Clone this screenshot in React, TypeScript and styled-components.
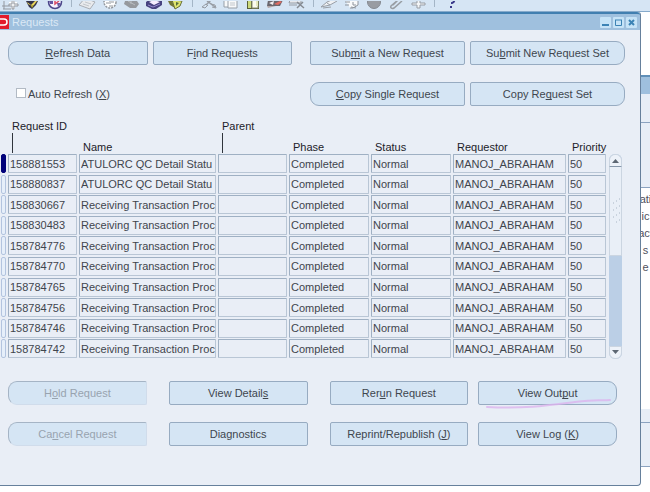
import React from "react";
import styled, { createGlobalStyle, css } from "styled-components";

const GlobalStyle = createGlobalStyle`
  * { box-sizing: border-box; }
  body {
    margin: 0;
    background: #fff;
    color: #3f454d;
    font: 11px/14px "Liberation Sans", Arial, sans-serif;
    overflow-x: hidden;
  }
  button, input { font: inherit; color: inherit; }
`;

const Toolbar = styled.header`
  display: flex;
  height: 12px;
  overflow: hidden;
  background: #d6e5f4;
  border-bottom: 1px solid #86aacb;
`;

const Tool = styled.button`
  flex: none;
  display: block;
  width: 22px;
  height: 11px;
  padding: 0 2px;
  border: 0;
  background: none;
  svg { display: block; }
`;

const Divider = styled.span`
  flex: none;
  width: 1px;
  height: 7px;
  margin: 0 5px;
  background: #a4b5c6;
`;

const Desktop = styled.main`
  display: flex;
  align-items: flex-start;
`;

const Window = styled.section`
  flex: 1;
  min-width: 0;
  background: #e9eef6;
  border: solid #66809c;
  border-width: 0 1px 1px 0;
  border-radius: 0 3px 4px 0;
`;

const TitleBar = styled.div`
  display: flex;
  align-items: center;
  height: 18px;
  padding-right: 3px;
  background: #9fc0de;
  border-top: 2px solid #417fb0;
  border-radius: 0 3px 0 0;
`;

const Title = styled.h1`
  flex: 1;
  margin: 0 0 0 3px;
  font-size: 11px;
  font-weight: normal;
  color: #dbe8f5;
`;

const WindowButton = styled.button`
  width: 11px;
  height: 11px;
  margin-left: 2px;
  padding: 0;
  border: 0;
  border-radius: 1px;
  background: #c6e3f7;
  svg { display: block; }
`;

const Actions = styled.div`
  display: flex;
  gap: 18px;
  padding: 11px 15px 0 8px;
`;

const ActionGroup = styled.div<{ $grow: number }>`
  flex: ${(p) => p.$grow} 1 0;
  display: grid;
  grid-template-columns: 1fr 1fr;
  gap: 17px 5px;
  align-items: center;
`;

const LowerActions = styled.div`
  display: grid;
  gap: 17px;
  padding: 21px 23px 39px 8px;
`;

const LowerRow = styled.div`
  display: flex;
  gap: 10px;
  > * { flex: 1 1 0; }
  > :not(:first-child):not(:last-child) { margin-left: 12px; }
`;

const Button = styled.button<{ $cap?: "left" | "right" }>`
  position: relative;
  height: 24px;
  padding: 0;
  border: 1px solid #97abc1;
  border-radius: 2px;
  background: #d5e5f4;
  color: #40464e;
  white-space: nowrap;
  ${(p) => p.$cap === "left" && css`border-radius: 9px 2px 2px 9px;`}
  ${(p) => p.$cap === "right" && css`border-radius: 2px 9px 9px 2px;`}
  &:disabled {
    color: #98a3af;
    border-color: #a5b4c5 #d0dceb #d0dceb #a5b4c5;
  }
`;

const Key = styled.u`
  text-decoration-skip-ink: none;
  text-underline-offset: 1px;
`;

const PenStroke = styled.svg`
  position: absolute;
  left: 6px;
  top: 15px;
  width: 128px;
  height: 14px;
  overflow: visible;
  pointer-events: none;
`;

const CheckLabel = styled.label`
  grid-column: 1 / -1;
  display: flex;
  align-items: center;
  height: 24px;
  padding-left: 8px;
  gap: 2px;
`;

const CheckBox = styled.input`
  appearance: none;
  width: 10px;
  height: 10px;
  margin: 0 0 3px;
  background: #fff;
  border: 1px solid #b2bac4;
  &:checked { background: #41699b; }
`;

const Records = styled.div`
  display: flex;
  align-items: flex-end;
  gap: 1px;
  padding: 13px 18px 0 0;
`;

const Table = styled.table`
  flex: 1;
  width: 100%;
  height: 241px;
  min-width: 0;
  table-layout: fixed;
  border-collapse: collapse;
`;

const Col = styled.col<{ $w?: number }>`
  width: ${(p) => (p.$w ? `${p.$w}px` : "auto")};
`;

const HeadCell = styled.th<{ $raised?: boolean }>`
  height: 35px;
  padding: 0 0 0 4px;
  vertical-align: ${(p) => (p.$raised ? "top" : "bottom")};
  text-align: left;
  font-weight: normal;
  color: #1c2129;
  white-space: nowrap;
  ${(p) => p.$raised && css`
    &::after {
      content: "";
      display: block;
      width: 1px;
      height: 20px;
      background: #30353c;
    }
  `}
`;

const Cell = styled.td`
  padding: 0 2px 0 0;
  vertical-align: top;
`;

const MarkerCell = styled.td`
  padding: 0 2px 0 1px;
  vertical-align: top;
`;

const Marker = styled.button<{ $current: boolean }>`
  display: block;
  width: 5px;
  height: 19px;
  padding: 0;
  border: 1px solid ${(p) => (p.$current ? "#02027a" : "#b3c4df")};
  border-radius: 2px;
  background: ${(p) => (p.$current ? "#02027a" : "#e6effa")};
`;

const Field = styled.input`
  display: block;
  width: 100%;
  height: 19px;
  padding: 0 0 0 1px;
  border: 1px solid;
  border-color: #9fb0c3 #b9c6d5 #b9c6d5 #9fb0c3;
  border-radius: 1px;
  background: #e9eef6;
  outline: 0;
`;

const ScrollBar = styled.div`
  flex: none;
  display: flex;
  flex-direction: column;
  width: 13px;
  height: 205px;
  margin-bottom: 1px;
  border-radius: 6px;
  background: #bbcfe6;
`;

const ScrollButton = styled.button<{ $end?: boolean }>`
  display: block;
  height: 13px;
  padding: 0;
  border: 1px solid #cbd5e1;
  border-radius: ${(p) => (p.$end ? "0 0 6px 6px" : "6px 6px 0 0")};
  ${(p) => !p.$end && css`border-bottom-color: #8697aa;`}
  background: #edf2f9;
  svg { display: block; margin: 0 auto; }
`;

const Thumb = styled.div`
  display: grid;
  place-items: center;
  height: 89px;
  background: #e9eff7;
  border: solid #cbd5e1;
  border-width: 0 1px 1px;
`;

const Track = styled.div`
  flex: 1;
`;

const Behind = styled.aside`
  flex: none;
  width: 9px;
  margin-top: 63px;
  overflow: hidden;
`;

const BehindTitle = styled.div`
  height: 19px;
  background: #9fc0de;
  border-top: 2px solid #5f8fb8;
`;

const BehindBand = styled.div<{ $h: number }>`
  height: ${(p) => p.$h}px;
  background: #e7eef7;
  border-bottom: 1px solid #8ba3c0;
`;

const BehindList = styled.div`
  display: flex;
  flex-direction: column;
  align-items: center;
  height: 221px;
  padding-top: 3px;
  background: #fff;
  line-height: 17px;
  white-space: nowrap;
  color: #50505c;
`;

const icons: Record<string, React.ReactNode> = {
  New: (
    <g fill="none" stroke="#92979f">
      <path d="M0 5h7M1 8h8M2 0v8" fill="#fff" />
      <path d="M11 0v8M7 3h8" stroke="#fff" strokeWidth="4" />
      <path d="M10 0v3H7v2h3v3h2V5h4V3h-4V0" fill="#eef0f2" />
    </g>
  ),
  Find: (
    <g>
      <path d="M3 0h11l-2 4-4 4-3-2-3-6z" fill="#33334a" />
      <path d="M3 1l4 3 4-4h2l-3 4-2 1-4-2z" fill="#ead75a" />
      <path d="M7 5l3-1-2 3z" fill="#b5a92d" />
    </g>
  ),
  Navigator: (
    <g>
      <circle cx="9" cy="1" r="6.5" fill="#f5f3ff" stroke="#4c4689" strokeWidth="1.5" />
      <path d="M3 0h4v3H4zM11 2h4l-3 4z" fill="#6555a0" />
      <path d="M9-2v5l4-3" fill="none" stroke="#dc4e65" strokeWidth="1.5" />
    </g>
  ),
  Save: (
    <g stroke="#a9aeb5">
      <path d="M0 4L6-3l10 4-5 7z" fill="#e8eaed" />
      <path d="M4 3l6 2M6 1l6 2" stroke="#c3c7cc" />
    </g>
  ),
  "Next Step": (
    <g fill="none" stroke="#92979d">
      <circle cx="9" cy="1" r="6" fill="#fff" strokeWidth="1.5" strokeDasharray="2 1" />
      <path d="M5 2h3M10 1h3M8 5h4M9-1v4" />
    </g>
  ),
  "Switch Responsibility": (
    <g>
      <path d="M2 0h12l2 3-3 4H7L1 3z" fill="#96999e" />
      <path d="M5 0l7 4M8 0v3" stroke="#b8bcc0" />
    </g>
  ),
  Print: (
    <g>
      <path d="M1 1l4-3 12 2v4l-6 4H7L1 5z" fill="#474380" />
      <path d="M4 1l5-2 6 2-6 3z" fill="#f6efff" />
      <path d="M3 4l5 2 7-3" stroke="#948bcf" fill="none" />
    </g>
  ),
  "Close Form": (
    <g>
      <path d="M1 0h4l3 7-5-3z" fill="#737635" />
      <path d="M5-1l10 1-2 5-5 3z" fill="#dfe46d" stroke="#697039" />
      <path d="M9 1v4l3-3z" fill="#536b38" />
    </g>
  ),
  Cut: (
    <g fill="none" stroke="#979ca4">
      <path d="M12-2L6 4M7 0l8 6" strokeWidth="1.5" />
      <path d="M6 3L2 6l3 1 3-3M11 3l4 1 1 3-4-1" />
    </g>
  ),
  Copy: (
    <g fill="#f8f9fa" stroke="#979fa8">
      <path d="M2-2h6v8H2z" />
      <path d="M6-1h9v8H6z" />
      <path d="M8 2h5M8 4h5" stroke="#c1c6cb" />
    </g>
  ),
  Paste: (
    <g>
      <path d="M3-1h12v9H3z" fill="#596038" />
      <path d="M4-1h3v8H4z" fill="#cdda7c" />
      <path d="M8-1h6v8H8z" fill="#fbfbee" stroke="#8b8e70" />
      <path d="M12 0h2v5h-2z" fill="#e5e9bd" />
    </g>
  ),
  "Clear Record": (
    <g>
      <path d="M2-1h15l-3 6H1z" fill="#6b676e" />
      <path d="M8 3l6-3 2 1-4 3z" fill="#e06b62" />
      <path d="M3 2l5-2-1 4z" fill="#f3eef0" />
      <path d="M1 5h9l-8 2z" fill="#b3a7a7" />
    </g>
  ),
  Delete: (
    <g fill="none" stroke="#989da4">
      <path d="M2-1h11v3H1zM1 4h8" fill="#e6e9ed" />
      <path d="M9 1l7 6M15 1L9 7" stroke="#858a91" strokeWidth="1.5" />
    </g>
  ),
  "Edit Field": (
    <g fill="#eff1f4" stroke="#989ea6">
      <path d="M0 6L6 1l7-3 3 2-7 4z" />
      <path d="M2 7l8-1M6 2l3 2" />
    </g>
  ),
  Zoom: (
    <g fill="#f9fafb" stroke="#8e949c">
      <path d="M2-1h13v5l-5 3H7" />
      <path d="M2 1h5M2 4h4M10 1v3h3M8 6l5 1" />
    </g>
  ),
  Translations: <circle cx="9" cy="1" r="6.5" fill="#999ca2" stroke="#858990" />,
  Attachments: (
    <g fill="none" stroke="#989da3" strokeWidth="1.5">
      <path d="M11-1L4 5c-1 2 1 3 3 2l8-7M12-2L6 4" />
    </g>
  ),
  "Folder Tools": (
    <g fill="#f3f5f7" stroke="#989da5">
      <path d="M3 2h5v-3h3v3h5v2h-5v3H8V4H3z" />
    </g>
  ),
  Help: (
    <g fill="none" stroke="#39388a" strokeWidth="2">
      <path d="M8-1c5-1 5 2 2 3v1M9 5v2" />
    </g>
  ),
};

const toolGroups = [
  ["New", "Find", "Navigator"],
  ["Save", "Next Step", "Switch Responsibility", "Print", "Close Form"],
  ["Cut", "Copy", "Paste", "Clear Record", "Delete"],
  ["Edit Field", "Zoom", "Translations", "Attachments", "Folder Tools"],
  ["Help"],
];

const windowGlyphs = [
  { label: "Minimize", d: "M2 8h7", width: 2 },
  { label: "Maximize", d: "M2 3h7M2.5 3v5.5h6V3", width: 1 },
  { label: "Close", d: "M3 3l5 5M8 3L3 8", width: 2 },
];

const columns: { label: string; width?: number; raised?: boolean }[] = [
  { label: "Request ID", width: 71, raised: true },
  { label: "Name" },
  { label: "Parent", width: 71, raised: true },
  { label: "Phase", width: 82 },
  { label: "Status", width: 82 },
  { label: "Requestor", width: 115 },
  { label: "Priority", width: 40 },
];

const qc = "ATULORC QC Detail Statu";
const receiving = "Receiving Transaction Proc";
const requests = [
  ["158881553", qc],
  ["158880837", qc],
  ["158830667", receiving],
  ["158830483", receiving],
  ["158784776", receiving],
  ["158784770", receiving],
  ["158784765", receiving],
  ["158784756", receiving],
  ["158784746", receiving],
  ["158784742", receiving],
].map(([id, name]) => [id, name, "", "Completed", "Normal", "MANOJ_ABRAHAM", "50"]);

export default function App() {
  return (
    <>
      <GlobalStyle />
      <Toolbar>
        {toolGroups.map((group, i) => (
          <React.Fragment key={group[0]}>
            {i > 0 && <Divider />}
            {group.map((name) => (
              <Tool key={name} type="button" aria-label={name}>
                <svg width="18" height="10" viewBox="0 0 18 10">{icons[name]}</svg>
              </Tool>
            ))}
          </React.Fragment>
        ))}
      </Toolbar>
      <Desktop>
        <Window>
          <TitleBar>
            <svg width="9" height="14" viewBox="0 0 9 14" aria-hidden="true">
              <path d="M0 0h9v14H0z" fill="#e21b2c" />
              <path d="M0 4h4a3 3 0 0 1 0 6H0" fill="none" stroke="#fff" strokeWidth="1.5" />
            </svg>
            <Title>Requests</Title>
            {windowGlyphs.map((g) => (
              <WindowButton key={g.label} type="button" aria-label={g.label}>
                <svg width="11" height="11" viewBox="0 0 11 11">
                  <path d={g.d} fill="none" stroke="#3c83b5" strokeWidth={g.width} />
                </svg>
              </WindowButton>
            ))}
          </TitleBar>

          <Actions>
            <ActionGroup $grow={284}>
              <Button type="button" $cap="left"><Key>R</Key>efresh Data</Button>
              <Button type="button">F<Key>i</Key>nd Requests</Button>
              <CheckLabel>
                <CheckBox type="checkbox" />
                <span>Auto Refresh (<Key>X</Key>)</span>
              </CheckLabel>
            </ActionGroup>
            <ActionGroup $grow={315}>
              <Button type="button">Sub<Key>m</Key>it a New Request</Button>
              <Button type="button" $cap="right">Su<Key>b</Key>mit New Request Set</Button>
              <Button type="button" $cap="left"><Key>C</Key>opy Single Request</Button>
              <Button type="button" $cap="right">Copy Re<Key>q</Key>uest Set</Button>
            </ActionGroup>
          </Actions>

          <Records>
            <Table>
              <colgroup>
                <Col $w={8} />
                {columns.map((c) => <Col key={c.label} $w={c.width} />)}
              </colgroup>
              <thead>
                <tr>
                  <td />
                  {columns.map((c) => (
                    <HeadCell key={c.label} scope="col" $raised={c.raised}>{c.label}</HeadCell>
                  ))}
                </tr>
              </thead>
              <tbody>
                {requests.map((row, r) => (
                  <tr key={row[0]}>
                    <MarkerCell>
                      <Marker type="button" $current={r === 0} aria-label={`Select request ${row[0]}`} />
                    </MarkerCell>
                    {row.map((value, c) => (
                      <Cell key={columns[c].label}>
                        <Field readOnly value={value} aria-label={`${columns[c].label}, row ${r + 1}`} />
                      </Cell>
                    ))}
                  </tr>
                ))}
              </tbody>
            </Table>
            <ScrollBar>
              <ScrollButton type="button" aria-label="Scroll up">
                <svg width="7" height="5" viewBox="0 0 7 5"><path d="M0 5l3.500-4L7 5z" fill="#5d6773" /></svg>
              </ScrollButton>
              <Thumb>
                <svg width="8" height="26" viewBox="0 0 8 26" aria-hidden="true">
                  <path d="M4 3h1M7 1h1M1 5h1M4 10h1M7 8h1M1 12h1M4 17h1M7 15h1M1 19h1M4 24h1M7 22h1" stroke="#a9b6c4" />
                </svg>
              </Thumb>
              <Track />
              <ScrollButton type="button" $end aria-label="Scroll down">
                <svg width="7" height="5" viewBox="0 0 7 5"><path d="M0 0l3.500 4L7 0z" fill="#5d6773" /></svg>
              </ScrollButton>
            </ScrollBar>
          </Records>

          <LowerActions>
            <LowerRow>
              <Button type="button" $cap="left" disabled>H<Key>o</Key>ld Request</Button>
              <Button type="button">View Detail<Key>s</Key></Button>
              <Button type="button">Rer<Key>u</Key>n Request</Button>
              <Button type="button" $cap="right">
                View Out<Key>p</Key>ut
                <PenStroke viewBox="0 0 128 14" aria-hidden="true">
                  <path d="M2 10C42 12 66 8 90 5S115 4 125 3" fill="none" stroke="#dcb4ed" strokeWidth="2" strokeLinecap="round" opacity="0.8" />
                </PenStroke>
              </Button>
            </LowerRow>
            <LowerRow>
              <Button type="button" $cap="left" disabled>Ca<Key>n</Key>cel Request</Button>
              <Button type="button">Diagnostics</Button>
              <Button type="button">Reprint/Republish (<Key>J</Key>)</Button>
              <Button type="button" $cap="right">View Log (<Key>K</Key>)</Button>
            </LowerRow>
          </LowerActions>
        </Window>

        <Behind>
          <BehindTitle />
          <BehindBand $h={29} />
          <BehindBand $h={65} />
          <BehindList>
            <div>ati</div>
            <div>ic</div>
            <div>act</div>
            <div>s</div>
            <div>e</div>
          </BehindList>
          <BehindBand $h={14} />
          <BehindBand $h={44} />
        </Behind>
      </Desktop>
    </>
  );
}
